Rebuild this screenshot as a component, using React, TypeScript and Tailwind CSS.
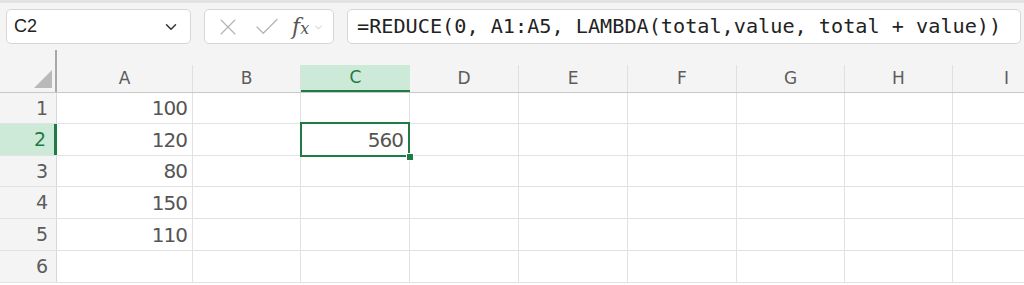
import { ChevronDown, X, Check } from 'lucide-react';

const cols = [
  { key: 'A', w: 'w-[136px]' },
  { key: 'B', w: 'w-[108px]' },
  { key: 'C', w: 'w-[109px]' },
  { key: 'D', w: 'w-[109px]' },
  { key: 'E', w: 'w-[109px]' },
  { key: 'F', w: 'w-[109px]' },
  { key: 'G', w: 'w-[108px]' },
  { key: 'H', w: 'w-[108px]' },
  { key: 'I', w: 'w-[108px]' },
];

const rows = [
  { n: 1, a: '100', h: 'h-[31px]' },
  { n: 2, a: '120', h: 'h-[32px]' },
  { n: 3, a: '80', h: 'h-[31px]' },
  { n: 4, a: '150', h: 'h-[32px]' },
  { n: 5, a: '110', h: 'h-[32px]' },
  { n: 6, a: '', h: 'h-[32px]' },
];

function Toolbar() {
  return (
    <div className="h-[50px] bg-[#f4f4f4] border-t-[3px] border-[#e2e2e2] flex items-center pl-[6px] gap-[13px] font-['Liberation_Sans',sans-serif]">
      <div className="w-[185px] h-[35px] bg-white border border-[#d6d6d6] rounded-[5px] flex items-center justify-between pl-[7px] pr-[10px]">
        <span className="text-[18px] text-[#222]">C2</span>
        <ChevronDown size={18} strokeWidth={2} className="text-[#333]" />
      </div>
      <div className="w-[130px] h-[35px] bg-white border border-[#d6d6d6] rounded-[5px] flex items-center pl-[9px] gap-[10px] text-[#b4b4b4]">
        <X size={28} strokeWidth={1} />
        <Check size={30} strokeWidth={1} />
        <span className="font-['DejaVu_Serif',serif] italic text-[22px] text-[#555] leading-none">
          f<span className="text-[16px]">x</span>
        </span>
        <ChevronDown size={11} strokeWidth={1.5} className="-ml-[6px] mt-[2px] text-[#aaa]" />
      </div>
      <div className="w-[674px] h-[35px] bg-white border border-[#d6d6d6] rounded-[5px] flex items-center pl-[9px]">
        <span className="font-['DejaVu_Sans_Mono',monospace] text-[20.2px] text-[#222] whitespace-pre">
          =REDUCE(0, A1:A5, LAMBDA(total,value, total + value))
        </span>
      </div>
    </div>
  );
}

function HeaderRow() {
  return (
    <div className="flex h-[43px] bg-[#f4f4f4] border-b border-[#c8c8c8]">
      <div className="w-[57px] shrink-0 relative border-r-[2px] border-[#a8a8a8]">
        <svg className="absolute left-[34px] top-[20px]" width="18" height="18" viewBox="0 0 18 18">
          <polygon points="18,0 18,18 0,18" fill="#b9b9b9" />
        </svg>
      </div>
      {cols.map((c) => (
        <div key={c.key} className={`${c.w} shrink-0 flex flex-col`}>
          <div className="h-[15px]" />
          {c.key === 'C' ? (
            <div className="flex-1 bg-[#cde9d8] border-b-[2px] border-[#1f7a45] flex items-center justify-center text-[17px] text-[#1f7a45]">
              {c.key}
            </div>
          ) : (
            <div className="flex-1 border-r border-[#e0e0e0] flex items-center justify-center text-[17px] text-[#5c5c5c]">
              {c.key}
            </div>
          )}
        </div>
      ))}
    </div>
  );
}

function DataRow({ r }: { r: (typeof rows)[number] }) {
  const sel = r.n === 2;
  return (
    <div className={`flex ${r.h} border-b border-[#e2e2e2] ${sel ? 'relative z-10' : ''}`}>
      <div
        className={`w-[57px] shrink-0 flex items-center justify-end pr-[8px] text-[19px] ${
          sel
            ? 'bg-[#cde9d8] text-[#1f7a45] border-r-[3px] border-[#1f7a45]'
            : 'bg-[#f4f4f4] text-[#5c5c5c] border-r border-[#d8d8d8]'
        }`}
      >
        {r.n}
      </div>
      {cols.map((c) => (
        <div
          key={c.key}
          className={`${c.w} shrink-0 relative border-r border-[#e2e2e2] flex items-center justify-end pr-[5px] text-[20px] tracking-[-1px] text-[#555]`}
        >
          {c.key === 'A' ? r.a : ''}
          {sel && c.key === 'C' && (
            <>
              <span className="pr-[1px]">560</span>
              <div className="absolute -left-[1px] -top-[2px] -right-[1px] -bottom-[2px] border-[2px] border-[#1f7a45]" />
              <div className="absolute -right-[5px] -bottom-[6px] w-[8px] h-[8px] bg-[#1f7a45] border border-white" />
            </>
          )}
        </div>
      ))}
    </div>
  );
}

export default function App() {
  return (
    <div className="w-[1024px] h-[285px] overflow-hidden bg-white">
      <Toolbar />
      <div className="font-['DejaVu_Sans',sans-serif]">
        <HeaderRow />
        {rows.map((r) => (
          <DataRow key={r.n} r={r} />
        ))}
      </div>
    </div>
  );
}
